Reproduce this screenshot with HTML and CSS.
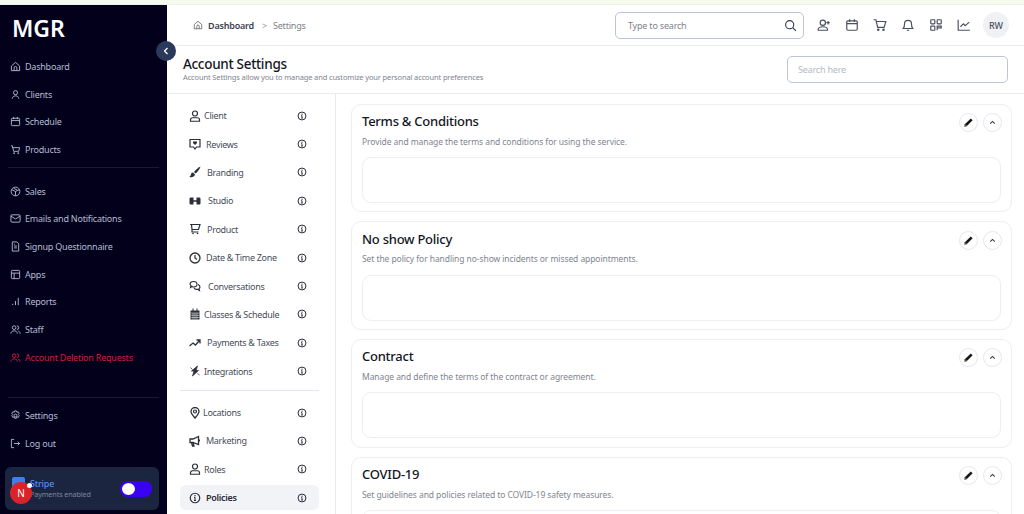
FILE: index.html
```html
<!DOCTYPE html>
<html lang="en">
<head>
  <meta charset="UTF-8" />
  <title>Account Settings</title>
  <link rel="stylesheet" href="styles.css">
</head>
<body>
  <svg class="sprites" width="0" height="0">
    <symbol id="info" viewBox="0 0 24 24"><circle cx="12" cy="12" r="9.5" fill="none" stroke="currentColor" stroke-width="2.4"/><path d="M12 11v6M10 11h2M10 17h4" fill="none" stroke="currentColor" stroke-width="2.2"/><circle cx="12" cy="7.5" r="1.5" fill="currentColor"/></symbol>
    <symbol id="pencil" viewBox="0 0 24 24"><path d="M17 3l4 4L8 20l-5 1 1-5z" fill="#16161e"/><path d="M4 16l4 4" stroke="#c98a3a" stroke-width="2"/></symbol>
    <symbol id="chevron" viewBox="0 0 24 24"><path d="M7 14.5l5-5 5 5" fill="none" stroke="currentColor" stroke-width="2.2"/></symbol>
    <symbol id="user" viewBox="0 0 24 24"><g fill="none" stroke="currentColor" stroke-width="2.4"><circle cx="12" cy="7" r="5"/><path d="M3 22.5v-3a4 4 0 0 1 4-4h10a4 4 0 0 1 4 4v3z"/></g></symbol>
  </svg>

  <div class="top-strip"></div>

  <div class="app">
    <aside class="sidebar">
      <div class="logo">MGR</div>

      <nav class="side-group">
        <a class="side-link"><svg viewBox="0 0 24 24"><path d="M3 11l9-8 9 8v10H3z"/><path d="M9 21v-6a3 3 0 0 1 6 0v6"/></svg>Dashboard</a>
        <a class="side-link"><svg viewBox="0 0 24 24"><circle cx="12" cy="8" r="4.5"/><path d="M5 21c0-4 3-6 7-6s7 2 7 6"/></svg>Clients</a>
        <a class="side-link"><svg viewBox="0 0 24 24"><rect x="3" y="5" width="18" height="16" rx="2"/><path d="M3 10h18M8 2v5M16 2v5"/></svg>Schedule</a>
        <a class="side-link"><svg viewBox="0 0 24 24"><path d="M2 4h3l3 12h11l2-8H6"/><circle cx="9" cy="20" r="1.2"/><circle cx="18" cy="20" r="1.2"/></svg>Products</a>
      </nav>

      <nav class="side-group">
        <a class="side-link"><svg viewBox="0 0 24 24"><circle cx="12" cy="12" r="9.5"/><path d="M4 8l8 4 8-4M12 12v9M8 5l8 4"/></svg>Sales</a>
        <a class="side-link"><svg viewBox="0 0 24 24"><rect x="2" y="4" width="20" height="16" rx="2"/><path d="M2 7l10 6 10-6"/></svg>Emails and Notifications</a>
        <a class="side-link"><svg viewBox="0 0 24 24"><path d="M5 2h10l4 4v16H5z"/><path d="M9 11h6M9 15h6M9 7h2"/></svg>Signup Questionnaire</a>
        <a class="side-link"><svg viewBox="0 0 24 24"><rect x="3" y="3" width="18" height="18" rx="2"/><path d="M3 9h18M9 9v12"/></svg>Apps</a>
        <a class="side-link"><svg viewBox="0 0 24 24"><path d="M6 20v-3M12 20V11M18 20V4"/></svg>Reports</a>
        <a class="side-link"><svg viewBox="0 0 24 24"><circle cx="9" cy="8" r="4"/><path d="M2 21c0-4 3-6 7-6s7 2 7 6M15 4a4 4 0 0 1 0 8M18 15c2 1 4 3 4 6"/></svg>Staff</a>
        <a class="side-link danger"><svg viewBox="0 0 24 24"><circle cx="9" cy="8" r="4"/><path d="M2 21c0-4 3-6 7-6s7 2 7 6M15 4a4 4 0 0 1 0 8M18 15c2 1 4 3 4 6"/></svg>Account Deletion Requests</a>
      </nav>

      <nav class="side-bottom">
        <a class="side-link"><svg viewBox="0 0 24 24"><circle cx="12" cy="12" r="3"/><path d="M10 2h4l1 3 3-1 2 3-2 3 2 2-2 4-3-1-1 3h-4l-1-3-3 1-2-4 2-2-2-3 2-3 3 1z"/></svg>Settings</a>
        <a class="side-link"><svg viewBox="0 0 24 24"><path d="M9 3H3v18h6M9 12h12M17 8l4 4-4 4"/></svg>Log out</a>
      </nav>

      <div class="stripe-card">
        <div class="stripe-logo"></div>
        <div class="stripe-text">
          <div class="stripe-name">Stripe</div>
          <div class="stripe-sub">Payments enabled</div>
        </div>
        <div class="toggle"><span class="knob"></span></div>
      </div>
      <div class="n-badge">N<span class="n-dot"></span></div>
    </aside>

    <button class="collapse"><svg viewBox="0 0 24 24"><path d="M15 6l-6 6 6 6"/></svg></button>

    <main class="main">
      <header class="topbar">
        <div class="crumbs">
          <svg class="crumb-home" viewBox="0 0 24 24"><path d="M3 11l9-8 9 8v10H3z"/><path d="M9 21v-6a3 3 0 0 1 6 0v6"/></svg>
          <b>Dashboard</b>
          <span class="crumb-sep">&gt;</span>
          <span class="crumb-now">Settings</span>
        </div>
        <div class="top-search">
          <span>Type to search</span>
          <svg viewBox="0 0 24 24"><circle cx="10.5" cy="10.5" r="7.5"/><path d="M16 16l6 6"/></svg>
        </div>
        <div class="top-icons">
          <svg viewBox="0 0 24 24"><circle cx="10" cy="8" r="4.5"/><path d="M2 21v-1c0-3 3-5 8-5s8 2 8 5v1zM19 5v6M16 8h6"/></svg>
          <svg viewBox="0 0 24 24"><rect x="3" y="5" width="18" height="16" rx="2"/><path d="M3 9.5h18M8 2v5M16 2v5"/></svg>
          <svg viewBox="0 0 24 24"><path d="M1 3h4l3 13h11l3-10H6"/><circle cx="9" cy="20" r="1.2"/><circle cx="18" cy="20" r="1.2"/></svg>
          <svg viewBox="0 0 24 24"><path d="M4 18c2-2 2-4 2-8a6 6 0 0 1 12 0c0 4 0 6 2 8zM10 21h4"/></svg>
          <svg viewBox="0 0 24 24"><rect x="3" y="3" width="7" height="7" rx="1"/><rect x="14" y="3" width="7" height="7" rx="1"/><rect x="3" y="14" width="7" height="7" rx="1"/><path d="M14 14h7v3h-7zM14 17v4"/></svg>
          <svg viewBox="0 0 24 24"><path d="M2 3v18h20M6 15l5-5 3 3 7-6"/></svg>
        </div>
        <div class="avatar">RW</div>
      </header>

      <section class="page-head">
        <div class="page-title">
          <h1>Account Settings</h1>
          <p>Account Settings allow you to manage and customize your personal account preferences</p>
        </div>
        <div class="page-search">Search here</div>
      </section>

      <div class="body-row">
        <nav class="settings-nav">
          <a class="set-link"><svg class="set-icon"><use href="#user"/></svg><span class="g3">Client</span><svg class="i"><use href="#info"/></svg></a>
          <a class="set-link"><svg class="set-icon" viewBox="0 0 24 24"><path d="M2 3h20v15h-7l-3 4-3-4H2z" fill="none" stroke="currentColor" stroke-width="2.4"/><path d="M12 14l-4-4V7h8v3z" fill="currentColor"/></svg><span class="g5">Reviews</span><svg class="i"><use href="#info"/></svg></a>
          <a class="set-link"><svg class="set-icon" viewBox="0 0 24 24"><path d="M23 1c-5 2-10 7-13 11l3 3c4-3 8-8 10-14z" fill="currentColor"/><path d="M8 13c-3 0-4 2-4 4 0 2-2 3-3 5 5 1 10 0 11-5z" fill="currentColor"/></svg><span class="g6">Branding</span><svg class="i"><use href="#info"/></svg></a>
          <a class="set-link"><svg class="set-icon" viewBox="0 0 24 24"><path d="M1 8c0-2 1-3 3-3h5v14H4c-2 0-3-1-3-3zM15 5h5c2 0 3 1 3 3v8c0 2-1 3-3 3h-5zM9 10.5h6v3H9z" fill="currentColor"/></svg><span class="g7">Studio</span><svg class="i"><use href="#info"/></svg></a>
          <a class="set-link"><svg class="set-icon" viewBox="0 0 24 24"><path d="M2 3h20l-3 10H6L5 3M6 13v5h13" fill="none" stroke="currentColor" stroke-width="2.4"/><circle cx="8" cy="21" r="1.6" fill="currentColor"/><circle cx="17" cy="21" r="1.6" fill="currentColor"/></svg><span class="g6">Product</span><svg class="i"><use href="#info"/></svg></a>
          <a class="set-link"><svg class="set-icon" viewBox="0 0 24 24"><circle cx="12" cy="12" r="10" fill="none" stroke="currentColor" stroke-width="2.6"/><path d="M12 6v6l4 3" fill="none" stroke="currentColor" stroke-width="2.4"/></svg><span class="g5">Date &amp; Time Zone</span><svg class="i"><use href="#info"/></svg></a>
          <a class="set-link"><svg class="set-icon" viewBox="0 0 24 24"><g fill="none" stroke="currentColor" stroke-width="2.2"><path d="M9 3c4 0 7 2.4 7 5.5S13 14 9 14c-1 0-2 0-3-1l-3 2 1-4C2.500 10 2 9 2 8.500 2 5.400 5 3 9 3z"/><path d="M18 9c2 1 4 2.500 4 5 0 1.500-1 2.500-2 3l1 4-4-2.500c-3 .5-6-1-7-3"/></g></svg><span class="g7">Conversations</span><svg class="i"><use href="#info"/></svg></a>
          <a class="set-link"><svg class="set-icon" viewBox="0 0 24 24"><path d="M3 5h18v18H3zM7 1h2v5H7zM15 1h2v5h-2z" fill="currentColor"/><path d="M3 10h18M3 14.5h18M3 19h18M8 10v13M12 10v13M16 10v13" stroke="#fff" stroke-width="1"/></svg><span class="g3">Classes &amp; Schedule</span><svg class="i"><use href="#info"/></svg></a>
          <a class="set-link"><svg class="set-icon" viewBox="0 0 24 24"><path d="M1 18l7-6 5 4 8-9M15 6h7v7" fill="none" stroke="currentColor" stroke-width="2.6"/></svg><span class="g6">Payments &amp; Taxes</span><svg class="i"><use href="#info"/></svg></a>
          <a class="set-link"><svg class="set-icon" viewBox="0 0 24 24"><path d="M17 2L5 12h5l-3 10 12-11h-5zM3 5l4 4M17 17l4 3" fill="currentColor" stroke="currentColor" stroke-width="1.5"/></svg><span class="g3">Integrations</span><svg class="i"><use href="#info"/></svg></a>

          <div class="set-divider"></div>

          <a class="set-link"><svg class="set-icon" viewBox="0 0 24 24"><path d="M12 22C7 16 4 13 4 9a8 8 0 0 1 16 0c0 4-3 7-8 13z" fill="none" stroke="currentColor" stroke-width="2.6"/><circle cx="12" cy="9" r="3" fill="none" stroke="currentColor" stroke-width="2.4"/></svg><span class="g2">Locations</span><svg class="i"><use href="#info"/></svg></a>
          <a class="set-link"><svg class="set-icon" viewBox="0 0 24 24"><path d="M2 8h6l11-5v16L8 15H2zM5 15l2 7h3l-2-7" fill="none" stroke="currentColor" stroke-width="2.6"/><path d="M19 9h3v4h-3" fill="currentColor"/></svg><span class="g5">Marketing</span><svg class="i"><use href="#info"/></svg></a>
          <a class="set-link"><svg class="set-icon"><use href="#user"/></svg><span class="g3">Roles</span><svg class="i"><use href="#info"/></svg></a>
          <a class="set-link active"><svg class="set-icon"><use href="#info"/></svg><span class="g5">Policies</span><svg class="i"><use href="#info"/></svg></a>
        </nav>

        <div class="cards">
          <section class="card">
            <div class="card-head">
              <h2>Terms &amp; Conditions</h2>
              <div class="card-actions">
                <button class="round"><svg><use href="#pencil"/></svg></button>
                <button class="round"><svg><use href="#chevron"/></svg></button>
              </div>
            </div>
            <p>Provide and manage the terms and conditions for using the service.</p>
            <div class="card-box"></div>
          </section>
          <section class="card">
            <div class="card-head">
              <h2>No show Policy</h2>
              <div class="card-actions">
                <button class="round"><svg><use href="#pencil"/></svg></button>
                <button class="round"><svg><use href="#chevron"/></svg></button>
              </div>
            </div>
            <p>Set the policy for handling no-show incidents or missed appointments.</p>
            <div class="card-box"></div>
          </section>
          <section class="card">
            <div class="card-head">
              <h2>Contract</h2>
              <div class="card-actions">
                <button class="round"><svg><use href="#pencil"/></svg></button>
                <button class="round"><svg><use href="#chevron"/></svg></button>
              </div>
            </div>
            <p>Manage and define the terms of the contract or agreement.</p>
            <div class="card-box"></div>
          </section>
          <section class="card">
            <div class="card-head">
              <h2>COVID-19</h2>
              <div class="card-actions">
                <button class="round"><svg><use href="#pencil"/></svg></button>
                <button class="round"><svg><use href="#chevron"/></svg></button>
              </div>
            </div>
            <p>Set guidelines and policies related to COVID-19 safety measures.</p>
            <div class="card-box"></div>
          </section>
        </div>
      </div>
    </main>
  </div>
</body>
</html>
```

FILE: styles.css
```css
* {
  box-sizing: border-box;
}

html, body {
  margin: 0;
  height: 514px;
  overflow: hidden;
}

body {
  font-family: "Noto Sans", Arial, sans-serif;
  font-size: 9px;
  letter-spacing: -0.2px;
  color: #33384a;
  background: #fff;
}

.sprites {
  position: absolute;
}

.top-strip {
  height: 5px;
  background: #f5fcee;
  border-bottom: 1px solid #eef0ec;
}

.app {
  display: flex;
  height: 509px;
  position: relative;
}

/* sidebar */
.sidebar {
  width: 167px;
  flex: none;
  background: #02001a;
  position: relative;
  display: flex;
  flex-direction: column;
  padding: 0 8px;
}

.logo {
  color: #fff;
  font-size: 23px;
  font-weight: 600;
  letter-spacing: 0;
  line-height: 26px;
  padding: 10px 0 0 4px;
  height: 47.5px;
}

.side-group {
  display: flex;
  flex-direction: column;
  padding-bottom: 4px;
  border-bottom: 1px solid #171a30;
}

.side-group + .side-group {
  padding-top: 9px;
  border-bottom: none;
}

.side-link {
  height: 27.7px;
  display: flex;
  align-items: center;
  gap: 4px;
  padding-left: 2px;
  color: #b3bcd2;
  font-size: 9px;
  letter-spacing: -0.22px;
  white-space: nowrap;
}

.side-link svg {
  width: 11px;
  height: 11px;
  flex: none;
  fill: none;
  stroke: currentColor;
  stroke-width: 2;
}

.side-link.danger {
  color: #d01f3c;
}

.side-bottom {
  margin-top: auto;
  border-top: 1px solid #171a30;
  padding-top: 4px;
  margin-bottom: 10px;
}

.stripe-card {
  height: 43px;
  margin: 0 0 4px -3px;
  width: 154px;
  background: #1c2540;
  border-radius: 6px;
  display: flex;
  align-items: center;
  padding: 0 7px;
  gap: 5px;
}

.stripe-logo {
  width: 13px;
  height: 13px;
  background: #3f7fe8;
  border-radius: 2px;
  flex: none;
  align-self: flex-start;
  margin-top: 10px;
}

.stripe-text {
  flex: 1;
  min-width: 0;
}

.stripe-name {
  color: #4f8ff0;
  font-size: 9px;
  font-weight: 500;
  line-height: 11px;
}

.stripe-sub {
  color: #7c869c;
  font-size: 7.2px;
  letter-spacing: -0.1px;
  line-height: 10px;
  white-space: nowrap;
}

.toggle {
  width: 32px;
  height: 16px;
  border-radius: 8px;
  background: #3a00f5;
  flex: none;
  padding: 2px;
}

.knob {
  display: block;
  width: 13px;
  height: 12px;
  border-radius: 50%;
  background: #fff;
}

.n-badge {
  position: absolute;
  left: 10px;
  top: 477px;
  width: 22px;
  height: 22px;
  border-radius: 50%;
  background: #d9232a;
  color: #fff;
  font-size: 10px;
  display: flex;
  align-items: center;
  justify-content: center;
}

.n-dot {
  position: absolute;
  left: 17px;
  top: 1px;
  width: 5px;
  height: 5px;
  border-radius: 50%;
  background: #fff;
}

.collapse {
  position: absolute;
  left: 156px;
  top: 36px;
  width: 20px;
  height: 20px;
  border-radius: 50%;
  border: none;
  padding: 4px;
  background: #2b3a5a;
  z-index: 2;
}

.collapse svg {
  display: block;
  fill: none;
  stroke: #fff;
  stroke-width: 2.5;
}

/* main */
.main {
  flex: 1;
  min-width: 0;
  display: flex;
  flex-direction: column;
}

.topbar {
  height: 41px;
  flex: none;
  display: flex;
  align-items: center;
  padding: 0 15px 0 26px;
  border-bottom: 1px solid #e9ebef;
}

.crumbs {
  display: flex;
  align-items: center;
  flex: 1;
  font-size: 9px;
}

.crumb-home {
  width: 10px;
  height: 10px;
  fill: none;
  stroke: #555;
  stroke-width: 1.8;
  margin-right: 5px;
}

.crumbs b {
  font-weight: 600;
  color: #3a3f4e;
}

.crumb-sep {
  margin: 0 6px 0 8px;
  color: #999;
}

.crumb-now {
  color: #7c8088;
}

.top-search {
  width: 189px;
  height: 27px;
  border: 1px solid #bcc4d6;
  border-radius: 5px;
  display: flex;
  align-items: center;
  justify-content: space-between;
  padding: 0 6px 0 12px;
  color: #7f838c;
}

.top-search svg {
  width: 13px;
  height: 13px;
  fill: none;
  stroke: #33384a;
  stroke-width: 2;
}

.top-icons {
  display: flex;
  gap: 14px;
  margin: 0 12.5px 0 12.5px;
}

.top-icons svg {
  width: 14px;
  height: 14px;
  fill: none;
  stroke: #4a5060;
  stroke-width: 2;
}

.avatar {
  width: 26px;
  height: 26px;
  border-radius: 50%;
  background: #f0f1f5;
  display: flex;
  align-items: center;
  justify-content: center;
  color: #4a5060;
  font-size: 9px;
  font-weight: 500;
  letter-spacing: 0;
}

.page-head {
  height: 48px;
  flex: none;
  display: flex;
  align-items: center;
  justify-content: space-between;
  padding: 0 16px;
  border-bottom: 1px solid #e9ebef;
}

.page-title {
  margin-top: -1px;
}

.page-title h1 {
  margin: 0;
  font-size: 13.5px;
  font-weight: 500;
  letter-spacing: -0.3px;
  line-height: 17px;
  color: #14161f;
}

.page-title p {
  margin: 0;
  font-size: 7.5px;
  letter-spacing: -0.14px;
  line-height: 9px;
  color: #80858f;
}

.page-search {
  width: 221px;
  height: 27px;
  border: 1px solid #bcc4d6;
  border-radius: 5px;
  padding: 0 10px;
  display: flex;
  align-items: center;
  color: #b5bac4;
}

.body-row {
  flex: 1;
  min-height: 0;
  display: flex;
  overflow: hidden;
}

/* settings nav */
.settings-nav {
  width: 169px;
  flex: none;
  padding: 7.5px 16px 0 13px;
  border-right: 1px solid #e9ebef;
}

.set-link {
  height: 28.4px;
  display: flex;
  align-items: center;
  padding: 0 12px 0 9px;
  font-size: 9px;
  letter-spacing: -0.3px;
  color: #484d5a;
  white-space: nowrap;
}

.set-link span {
  flex: 1;
}

.set-icon {
  width: 12px;
  height: 12px;
  flex: none;
  color: #2c2f3a;
}

.g2 { margin-left: 2px; }
.g3 { margin-left: 3px; }
.g5 { margin-left: 5px; }
.g6 { margin-left: 6px; }
.g7 { margin-left: 7px; }

.i {
  width: 10px;
  height: 10px;
  flex: none;
  margin-left: 4px;
  color: #2c2f3a;
}

.set-divider {
  height: 1px;
  background: #e4e7ee;
  margin: 5px 0 7px;
}

.set-link.active {
  height: 25.4px;
  margin-top: 1.5px;
  background: #f2f3f7;
  border-radius: 6px;
  font-weight: 600;
  color: #2a2d38;
}

/* cards */
.cards {
  flex: 1;
  min-width: 0;
  padding: 9.5px 12px 0 15px;
  display: flex;
  flex-direction: column;
  gap: 9px;
}

.card {
  flex: none;
  height: 108.7px;
  border: 1px solid #eceef4;
  border-radius: 10px;
  padding: 7.5px 10px 0;
}

.card-head {
  height: 18px;
  display: flex;
  align-items: center;
  justify-content: space-between;
}

.card h2 {
  margin: 0;
  font-size: 13px;
  font-weight: 500;
  letter-spacing: -0.25px;
  color: #14161f;
}

.card-actions {
  display: flex;
  gap: 5px;
  margin: 3px -1px 0 0;
}

.round {
  width: 19px;
  height: 19px;
  border-radius: 50%;
  border: 1px solid #e4e7ee;
  background: #fff;
  padding: 3px;
  color: #33384a;
}

.round svg {
  display: block;
  width: 11px;
  height: 11px;
}

.card p {
  margin: 5.5px 0 0;
  font-size: 8.5px;
  letter-spacing: -0.08px;
  line-height: 12px;
  color: #80858f;
}

.card-box {
  height: 46px;
  margin-top: 9.5px;
  border: 1px solid #eceef4;
  border-radius: 9px;
}
```
